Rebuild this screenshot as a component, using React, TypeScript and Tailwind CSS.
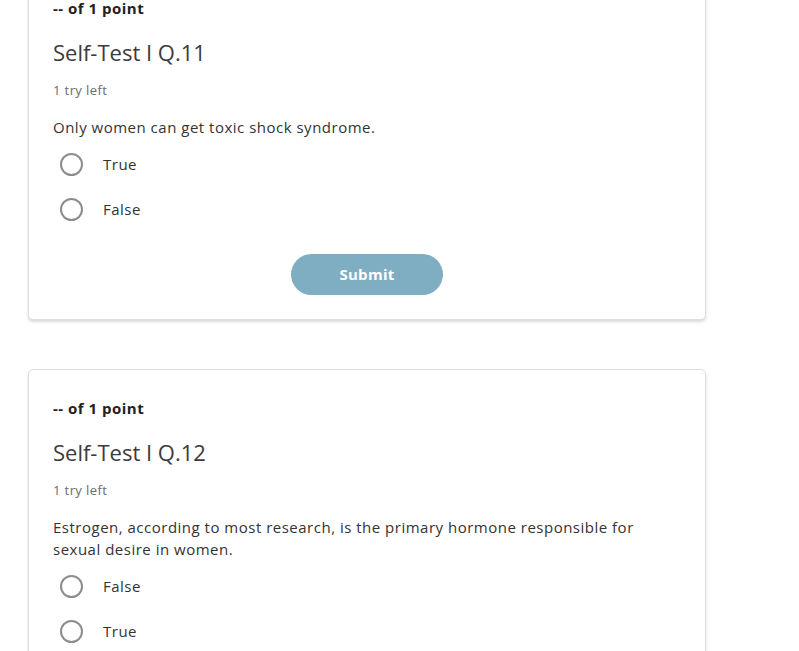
import React from "react";

interface Question {
  id: number;
  prompt: string;
  options: string[];
  showSubmit: boolean;
}

const QUESTIONS: Question[] = [
  {
    id: 11,
    prompt: "Only women can get toxic shock syndrome.",
    options: ["True", "False"],
    showSubmit: true,
  },
  {
    id: 12,
    prompt:
      "Estrogen, according to most research, is the primary hormone responsible for sexual desire in women.",
    options: ["False", "True"],
    showSubmit: false,
  },
];

function QuestionCard({ q }: { q: Question }) {
  return (
    <div className="w-[678px] rounded-[5px] border border-[#dedede] bg-white px-6 pt-7 pb-6 shadow-[0_2px_3px_rgba(0,0,0,0.15)]">
      <p className="text-[15px] leading-5 font-bold tracking-[0.5px] text-[#222]">-- of 1 point</p>
      <h2 className="mt-[19px] text-[22px] leading-[30px] text-[#3b3b3b]">
        Self-Test I Q.{q.id}
      </h2>
      <p className="mt-[14px] text-[13px] leading-[18px] tracking-[0.4px] text-[#6b6b6b]">1 try left</p>
      <p className="mt-[17px] max-w-[600px] text-[15px] leading-[22px] tracking-[0.5px] text-[#333]">
        {q.prompt}
      </p>

      {/* Options */}
      <div className="mt-[15px] flex flex-col gap-[23px] pl-[7px]">
        {q.options.map((opt) => (
          <label key={opt} className="flex h-[22px] items-center gap-5 cursor-pointer">
            <span className="h-[23px] w-[23px] shrink-0 rounded-full border-2 border-[#8c8c8c] bg-white" />
            <span className="text-[15px] tracking-[0.5px] text-[#333]">{opt}</span>
          </label>
        ))}
      </div>

      {q.showSubmit && (
        <div className="mt-[34px] flex justify-center">
          <button className="h-[41px] w-[152px] rounded-full bg-[#7fadc1] text-[15px] font-bold tracking-[0.3px] text-white">
            Submit
          </button>
        </div>
      )}
    </div>
  );
}

export default function App() {
  return (
    <div
      className="min-h-screen overflow-hidden bg-white pl-[28px]"
      style={{ fontFamily: '"Open Sans", "Noto Sans", sans-serif' }}
    >
      <div className="-mt-[31px] flex flex-col gap-[49px]">
        {QUESTIONS.map((q) => (
          <QuestionCard key={q.id} q={q} />
        ))}
      </div>
    </div>
  );
}
